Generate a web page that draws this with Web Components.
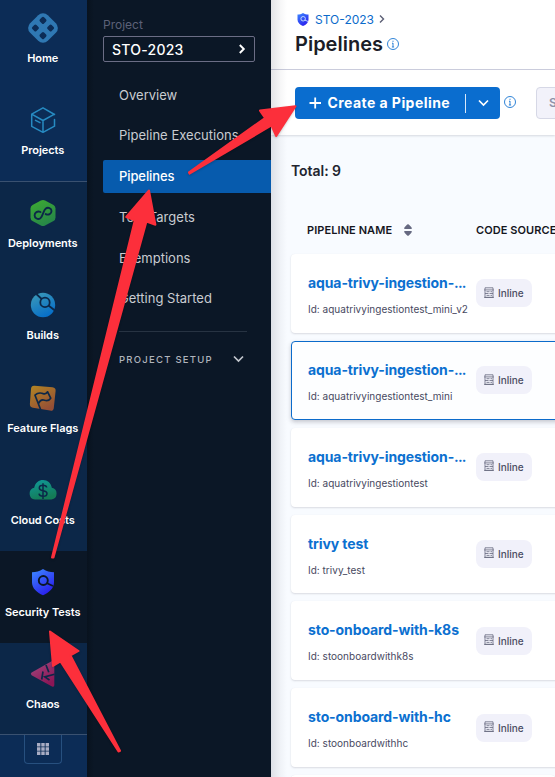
<!DOCTYPE html>
<html lang="en">
<head>
<meta charset="utf-8">
<title>Pipelines</title>
<style>
html,body{margin:0;height:777px;overflow:hidden}
body{font-family:Inter,"Liberation Sans",sans-serif;background:#f8fbff}
</style>
</head>
<body>
<app-shell></app-shell>
<script>
const define = (name, html) => {
  customElements.define(name, class extends HTMLElement {
    constructor() {
      super();
      const t = document.createElement('template');
      t.innerHTML = typeof html === 'function' ? html(this) : html;
      this.attachShadow({mode: 'open'}).append(t.content.cloneNode(true));
    }
  });
};

const shield = `<defs><linearGradient id="s" x1="0" y1="0" x2=".6" y2="1"><stop stop-color="#3d8bff"/><stop offset="1" stop-color="#2a20ee"/></linearGradient></defs>
<path d="M15 2C18.500 4.300 22 5.100 26 5.200V15.500C26 21.300 21 25.600 15 28.200C9 25.600 4 21.300 4 15.500V5.200C8 5.100 11.500 4.300 15 2Z" fill="url(#s)"/>
<circle cx="15.300" cy="13.500" r="4.500" fill="none" stroke="#0b1726" stroke-width="1.900"/><path d="M18.500 16L25 19" stroke="#0b1726" stroke-width="1.900" fill="none"/>`;

const icons = {
home: `<rect x="2.500" y="2.500" width="25" height="25" rx="6.800" transform="rotate(45 15 15)" fill="#2f78b3"/>
<g fill="#0c2c56"><rect x="-2.900" y="-2.900" width="5.800" height="5.800" rx="1.500" transform="translate(15 7.400) rotate(45)"/><rect x="-2.900" y="-2.900" width="5.800" height="5.800" rx="1.500" transform="translate(7.400 15) rotate(45)"/><rect x="-2.900" y="-2.900" width="5.800" height="5.800" rx="1.500" transform="translate(22.600 15) rotate(45)"/><rect x="-2.900" y="-2.900" width="5.800" height="5.800" rx="1.500" transform="translate(15 22.600) rotate(45)"/></g>`,
projects: `<g fill="none" stroke="#278bc2" stroke-width="1.500" stroke-linejoin="round" stroke-linecap="round"><path d="M26.500 9.500L15 2.800L3.700 9.200V21.300L15 27.300L26.500 21.200V14.500M3.700 9.200L15 15.500L26.500 9.200M15 15.500V27.300M7.500 15.300L12 17.700"/></g>`,
deployments: `<defs><linearGradient id="d" x2=".5" y2="1"><stop stop-color="#3eac31"/><stop offset="1" stop-color="#278748"/></linearGradient></defs><path d="M12.900 2.500Q15 1.400 17.100 2.500L25.500 7Q27.500 8.100 27.500 10.400V19.600Q27.500 21.900 25.500 23L17.100 27.500Q15 28.600 12.900 27.500L4.500 23Q2.500 21.900 2.500 19.600V10.400Q2.500 8.100 4.500 7Z" fill="url(#d)"/>
<path d="M12.500 14C9.500 12.700 6.600 14.500 6.600 17.300C6.600 20.300 9.900 21.900 12.400 20.200C14.800 18.600 15.100 12.700 17.600 10.700C20.100 8.700 23.500 10.200 23.500 13C23.500 16 20.500 17.500 17.700 16.100" fill="none" stroke="#0c2748" stroke-width="1.900" stroke-linecap="round"/>`,
builds: `<defs><linearGradient id="b" x2=".5" y2="1"><stop stop-color="#3f9cb6"/><stop offset="1" stop-color="#0870c8"/></linearGradient></defs><circle cx="15" cy="15" r="12.200" fill="url(#b)"/><circle cx="17" cy="12.400" r="4.700" fill="none" stroke="#0c2748" stroke-width="1.800"/><path d="M8.300 4L13.700 9M20.500 15.500L27.500 21" stroke="#0c2748" stroke-width="1.800"/>`,
flags: `<defs><linearGradient id="f" x2=".6" y2="1"><stop stop-color="#b38623"/><stop offset="1" stop-color="#954f36"/></linearGradient></defs><path d="M6.500 2.700L24.500 4.200Q28 4.600 27.600 8L25.800 24.900Q25.400 28.300 22 27.600L5 24.800Q1.600 24.200 1.900 20.800L3 6Q3.300 2.400 6.500 2.700Z" fill="url(#f)"/><path d="M12.600 26.500L7 12.200C9.500 9.800 12.500 9.600 15.200 10.600C17.200 11.200 18.600 10.500 19.600 8.800L22.700 15.200C21.200 17.600 19 18 16.500 17.200C13.700 16.400 11.800 17.600 10.600 20.300" fill="none" stroke="#0c2748" stroke-width="1.700" stroke-linejoin="round"/>`,
cloud: `<defs><linearGradient id="c" x2=".4" y2="1"><stop stop-color="#109a9c"/><stop offset="1" stop-color="#147c56"/></linearGradient></defs><path d="M7 24.500A6 6 0 0 1 6.200 12.700C7.200 7.500 11 5 15 5C19.500 5 23 8 23.800 12.700A6 6 0 0 1 23.500 24.500Z" fill="url(#c)"/><path d="M18.700 12.500C18.400 10.700 16.900 10.300 15 10.300C12.800 10.300 11.300 11.200 11.300 13C11.300 17 19 14.400 19 18.500C19 20.500 17.200 21.300 15 21.300C12.900 21.300 11.300 20.500 11 18.700M15 8.300V24" fill="none" stroke="#0c2748" stroke-width="1.500"/>`,
shield,
chaos: `<defs><linearGradient id="h" x2=".6" y2="1"><stop stop-color="#a04a80"/><stop offset="1" stop-color="#8c1656"/></linearGradient></defs><path d="M3.600 13.600L24 2.100Q26.300 1.300 26.300 3.500V26Q26.300 28.500 24 27.500L3.600 16.200Q2 15 3.600 13.600Z" fill="url(#h)"/><path d="M13.700 20.500L15 12.500M26.500 15.300L16.800 17.900L21.500 21M18 6L20.800 13.200" fill="none" stroke="#0c2748" stroke-width="1.700"/>`
};

define('rail-item', el => `<style>
:host{display:flex;flex-direction:column;align-items:center;box-sizing:border-box;height:92.3px;padding:16px 1.500px 0 0;flex:none;color:#fff;white-space:nowrap}
:host([active]){background:#0b1726}
svg{width:30px;height:30px;flex:none}
span{font-size:11px;font-weight:600;line-height:16px;margin-top:7px;letter-spacing:-.05px}
</style><svg viewBox="0 0 30 30">${icons[el.getAttribute('icon')]}</svg><span><slot></slot></span>`);

define('module-rail', `<style>
:host{display:flex;flex-direction:column;width:87px;height:777px;flex:none;background:#0c2c56;overflow:hidden}
.top{display:flex;flex-direction:column;margin-top:-3px;height:184px;flex:none}
.mods{display:flex;flex-direction:column;background:#0c2748;border-top:1px solid #3a5170;border-bottom:1px solid #3a5170;height:552px;flex:none}
.grid{width:36px;height:28px;margin:0 0 0 24px;border:1px solid #27507f;border-top:0;border-radius:0 0 4px 4px;display:flex;align-items:center;justify-content:center}
</style>
<div class="top"><rail-item icon="home">Home</rail-item><rail-item icon="projects">Projects</rail-item></div>
<div class="mods"><rail-item icon="deployments">Deployments</rail-item><rail-item icon="builds">Builds</rail-item><rail-item icon="flags">Feature Flags</rail-item><rail-item icon="cloud">Cloud Costs</rail-item><rail-item icon="shield" active>Security Tests</rail-item><rail-item icon="chaos">Chaos</rail-item></div>
<div class="grid"><svg width="12" height="12" viewBox="0 0 12 12" fill="#a9adc4"><path d="M0 0h3.400v3.400H0zM4.300 0h3.400v3.400H4.300zM8.600 0H12v3.400H8.600zM0 4.300h3.400v3.400H0zM4.300 4.300h3.400v3.400H4.300zM8.600 4.300H12v3.400H8.600zM0 8.600h3.400V12H0zM4.300 8.600h3.400V12H4.300zM8.600 8.600H12V12H8.600z"/></svg></div>`);

define('nav-link', `<style>
:host{display:flex;align-items:center;height:33px;padding-left:16px;font-size:13px;color:#c9ccd1;border-radius:2px 0 0 2px;letter-spacing:.02px;white-space:nowrap}
:host([active]){background:#075bad;color:#fff;font-weight:500;letter-spacing:-.1px}
</style><slot></slot>`);

define('project-nav', `<style>
:host{display:block;box-sizing:border-box;width:184px;height:777px;flex:none;background:linear-gradient(90deg,#08121e,#0b1726 7px);padding:17px 0 0 16px}
.cap{font-size:12px;line-height:16px;color:#5c6178;letter-spacing:0}
.pick{box-sizing:border-box;width:152px;height:26px;margin-top:3px;border:1px solid #6b6d85;border-radius:2px;display:flex;align-items:center;justify-content:space-between;padding:0 8px;color:#fff;font-size:14px;font-weight:500;letter-spacing:.25px}
nav{margin-top:16px;display:flex;flex-direction:column;gap:7.800px}
.setup{margin:16px 24px 0 16px;border-top:1px solid #273342;display:flex;align-items:center;justify-content:space-between;height:55px;font-size:9.500px;color:#b0b4bc;font-weight:500;letter-spacing:1.250px}
.setup svg{margin-right:1px}
</style>
<div class="cap">Project</div>
<div class="pick"><span>STO-2023</span><svg width="9" height="12" viewBox="0 0 9 12" fill="none" stroke="#fff" stroke-width="1.900"><path d="M2.800 2L6.800 6L2.800 10"/></svg></div>
<nav><nav-link>Overview</nav-link><nav-link>Pipeline Executions</nav-link><nav-link active>Pipelines</nav-link><nav-link>Test Targets</nav-link><nav-link>Exemptions</nav-link><nav-link>Getting Started</nav-link></nav>
<div class="setup"><span>PROJECT SETUP</span><svg width="14" height="10" viewBox="0 0 14 10" fill="none" stroke="#c3c7ce" stroke-width="1.700"><path d="M2 2.500L6.500 7L11 2.500"/></svg></div>`);

define('info-dot', `<style>:host{display:flex;flex:none}</style><svg width="12" height="12" viewBox="0 0 12 12"><circle cx="6" cy="6" r="5.500" fill="none" stroke="#1976d2" stroke-width=".9"/><path d="M6 5v4M6 2.700v1.200M5 5.200h1M4.900 9h2.200" stroke="#1976d2" stroke-width=".9"/></svg>`);

define('page-header', `<style>
:host{display:block;box-sizing:border-box;height:70px;padding:11px 0 0 24px;background:#fff;border-bottom:1px solid #cdcfdf}
.crumb{display:flex;align-items:center;height:16px;font-size:12px;color:#0b6bcb;letter-spacing:0}
.crumb svg:first-child{margin:0 4px 0 0}
.crumb svg:last-child{margin-left:4px}
.title{display:flex;align-items:center;height:26px;margin-top:4px;font-size:20px;font-weight:600;color:#1b1d27;letter-spacing:0}
info-dot{margin-left:4px}
</style>
<div class="crumb"><svg width="16" height="15" viewBox="0 0 30 30">${shield.replaceAll('#0b1726','#c4dcff')}</svg><span>STO-2023</span><svg width="8" height="10" viewBox="0 0 8 10" fill="none" stroke="#5b5e74" stroke-width="1.400"><path d="M2 1.500L5.500 5L2 8.500"/></svg></div>
<div class="title"><span>Pipelines</span><info-dot></info-dot></div>`);

define('action-bar', `<style>
:host{display:flex;box-sizing:border-box;height:65px;padding:17px 0 0 24px;background:#fff;box-shadow:0 1px 2px rgba(40,41,61,.16);position:relative}
.create{display:flex;align-items:center;width:205px;height:32px;flex:none;background:#0a6dcf;border-radius:4px;color:#fff;font-size:14px;font-weight:700;letter-spacing:.44px;white-space:nowrap}
.plus{margin:0 5.500px 0 14px}
.text{width:137.500px;margin-top:-1px}
.sep{width:1px;height:19px;background:#d8e8fa}
.down{margin-left:10.500px}
info-dot{margin:9px 0 0 4px}
.s{box-sizing:border-box;width:60px;height:32px;flex:none;margin-left:20px;border:1px solid #d6d8e6;border-radius:4px;background:#f2f2fa;color:#8f91a8;font-size:12px;font-weight:600;line-height:30px;padding-left:12px}
</style>
<div class="create"><svg class="plus" width="13" height="12" viewBox="0 0 13 12" stroke="#fff" stroke-width="1.800"><path d="M0.500 6h11.500M6.200 .4v11.200"/></svg><span class="text">Create a Pipeline</span><i class="sep"></i><svg class="down" width="13" height="10" viewBox="0 0 13 10" fill="none" stroke="#fff" stroke-width="1.700"><path d="M2 2.500L6.500 7L11 2.500"/></svg></div><info-dot></info-dot><div class="s">S</div>`);

define('pipeline-card', el => `<style>
:host{display:flex;box-sizing:border-box;height:78.850px;width:300px;flex:none;background:#fff;border:1px solid transparent;border-radius:4px;box-shadow:0 0 1px rgba(40,41,61,.05),0 1px 2px rgba(96,97,112,.2);padding-left:16px;white-space:nowrap}
:host([active]){border-color:#0b6bcb;box-shadow:0 2px 4px rgba(96,97,112,.35);background:#fdfeff}
.info{width:168px;flex:none;padding-top:18px}
.name{font-size:14px;font-weight:670;line-height:20px;color:#0b70d0;letter-spacing:-.1px}
.id{font-size:10px;line-height:14px;margin-top:9px;color:#474961;letter-spacing:0.020px}
.pill{box-sizing:border-box;display:flex;align-items:center;width:56px;height:28px;margin-top:24.300px;padding-left:8px;background:#f1f1fa;border-radius:8px;font-size:10px;font-weight:500;color:#4b4d63}
.pill svg{margin:-2px 4px 0 0;flex:none}
::slotted(span){letter-spacing:-.9px}
</style>
<div class="info"><div class="name"><slot></slot></div><div class="id">Id: ${el.getAttribute('ident')}</div></div>
<div class="pill"><svg width="10" height="11" viewBox="0 0 10 11" fill="none" stroke="#66687e" stroke-width=".8"><path d="M1 2.900V10.400H9V2.900M1 2.700V.8H9V2.700M0 2.900H10M0 10.400H10M2.500 4.700H5.500M6.500 4.700H8M1 6.500H4.500M5.500 6.500H9M2.500 8.400H5.500M6.500 8.400H8"/></svg>Inline</div>`);

define('pipeline-list', `<style>
:host{display:block;padding:25px 0 0 20px}
.total{font-size:14px;line-height:22px;font-weight:600;color:#22242f;letter-spacing:-.05px}
.head{display:flex;align-items:center;height:16px;margin-top:40px;padding-left:16px;font-size:11px;font-weight:600;color:#15161e;white-space:nowrap;letter-spacing:.08px}
.head svg{margin-left:12px}
.a{width:169px;display:flex;align-items:center;flex:none}
.rows{display:flex;flex-direction:column;gap:8px;margin-top:16px}
.next{height:20px;background:#fff;border-radius:4px 4px 0 0;box-shadow:0 0 1px rgba(40,41,61,.1)}
</style>
<div class="total">Total: 9</div>
<div class="head"><div class="a"><span>PIPELINE NAME</span><svg width="8" height="12" viewBox="0 0 8 12" fill="#666981"><path d="M.3 4.900Q0 3.800 .8 3L3.200 .6Q4 0 4.800 .6L7.200 3Q8 3.800 7.700 4.900ZM.3 7.100Q0 8.200 .8 9L3.200 11.400Q4 12 4.800 11.400L7.200 9Q8 8.200 7.700 7.100Z"/></svg></div><span>CODE SOURCE</span></div>
<div class="rows">
<pipeline-card ident="aquatrivyingestiontest_mini_v2">aqua-trivy-ingestion-<span>...</span></pipeline-card>
<pipeline-card ident="aquatrivyingestiontest_mini" active>aqua-trivy-ingestion-<span>...</span></pipeline-card>
<pipeline-card ident="aquatrivyingestiontest">aqua-trivy-ingestion-<span>...</span></pipeline-card>
<pipeline-card ident="trivy_test">trivy test</pipeline-card>
<pipeline-card ident="stoonboardwithk8s">sto-onboard-with-k8s</pipeline-card>
<pipeline-card ident="stoonboardwithhc">sto-onboard-with-hc</pipeline-card>
<div class="next"></div>
</div>`);

define('arrow-overlay', `<style>:host{position:absolute;inset:0;pointer-events:none}svg{display:block}</style>
<svg width="555" height="777" viewBox="0 0 555 777" fill="#fc2f3b" stroke="#fc2f3b" stroke-width="2" stroke-linejoin="round" style="filter:drop-shadow(0 1px 1px rgba(0,0,0,.2))">
<path d="M189 172.300L265 118L260 110.600L295.500 106.200L276.200 136L271.500 125.500L189.500 173.600Z"/>
<path d="M52 557.500L134.800 220.300L126.200 217L149 190.500L155.400 224.700L146.500 221.500L53.500 557.500Z"/>
<path d="M118.500 751.500L60.500 661.500L53 666L50 631.500L78.500 651L70.500 655.500L120 750.800Z"/>
</svg>`);

define('app-shell', `<style>
:host{display:flex;width:555px;height:777px;overflow:hidden;position:relative;background:#f8fbff}
main{width:284px;height:777px;overflow:hidden;position:relative}
.shade{position:absolute;left:0;top:0;width:16px;height:777px;background:linear-gradient(90deg,rgba(40,45,65,.13),rgba(40,45,65,.04) 60%,transparent)}
</style>
<module-rail></module-rail><project-nav></project-nav>
<main><page-header></page-header><action-bar></action-bar><pipeline-list></pipeline-list><div class="shade"></div></main>
<arrow-overlay></arrow-overlay>`);
</script>
</body>
</html>
